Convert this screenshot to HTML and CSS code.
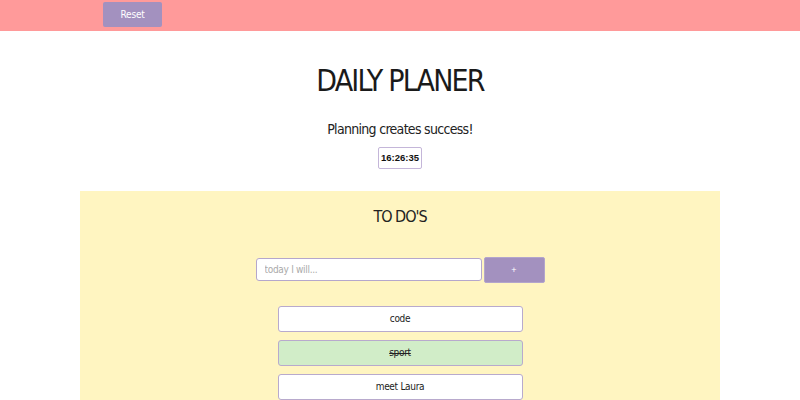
FILE: index.html
```html
<!DOCTYPE html>
<html>
<head>
<meta charset="utf-8">
<link rel="stylesheet" href="styles.css">
</head>
<body>
<header class="topbar">
  <button class="reset-btn">Reset</button>
</header>
<main>
  <h1 class="title">DAILY PLANER</h1>
  <p class="subtitle">Planning creates success!</p>
  <div class="clock-row"><span class="clock">16:26:35</span></div>
  <section class="todo">
    <h2 class="todo-title">TO DO'S</h2>
    <form class="add-form">
      <input class="todo-input" type="text" placeholder="today I will...">
      <button class="add-btn" type="button">+</button>
    </form>
    <ul class="todo-list">
      <li class="todo-item">code</li>
      <li class="todo-item done">sport</li>
      <li class="todo-item">meet Laura</li>
    </ul>
  </section>
</main>
</body>
</html>
```
FILE: styles.css
```css
* { box-sizing: border-box; }
body {
  margin: 0;
  font-family: "DejaVu Sans Condensed", "DejaVu Sans", sans-serif;
  font-stretch: condensed;
  color: #222;
  background: #fff;
}
.topbar {
  height: 31px;
  background: #ff9a9a;
  display: flex;
  align-items: flex-start;
  padding: 2px 0 0 103px;
}
.reset-btn {
  width: 59px;
  height: 25px;
  border: none;
  border-radius: 2px;
  background: #a391bf;
  color: #fff;
  font-family: "DejaVu Sans Condensed", sans-serif;
  font-stretch: condensed;
  font-size: 10px;
  letter-spacing: -0.2px;
}
main { display: flex; flex-direction: column; align-items: center; }
.title {
  margin: 30px 0 0;
  font-weight: normal;
  font-size: 30px;
  line-height: 40px;
  letter-spacing: -1.8px;
  color: #1a1a1a;
}
.subtitle {
  margin: 17px 0 0;
  font-size: 14px;
  line-height: 22px;
  letter-spacing: -0.7px;
  color: #222;
}
.clock-row { margin-top: 6px; height: 22px; }
.clock {
  display: inline-block;
  height: 22px;
  padding: 0 2px;
  border: 1px solid #c4b6d9;
  border-radius: 2px;
  font-family: "Liberation Sans", Arial, sans-serif;
  font-weight: bold;
  font-size: 9.5px;
  line-height: 20px;
  color: #111;
}
.todo {
  align-self: stretch;
  margin: 23px 80px 0;
  background: #fff5c1;
  display: flex;
  flex-direction: column;
  align-items: center;
  padding-top: 14px;
  min-height: 220px;
}
.todo-title {
  margin: 0;
  font-weight: normal;
  font-size: 16px;
  line-height: 24px;
  letter-spacing: -1px;
  color: #222;
}
.add-form {
  display: flex;
  align-items: flex-start;
  gap: 2px;
  margin-top: 28px;
}
.todo-input {
  margin-top: 1px;
  width: 226px;
  height: 23px;
  border: 1px solid #b5a7cc;
  border-radius: 3px;
  padding: 0 8px;
  font-family: "DejaVu Sans Condensed", sans-serif;
  font-stretch: condensed;
  font-size: 10px;
  letter-spacing: -0.3px;
  background: #fff;
}
.todo-input::placeholder { color: #aaa; }
.add-btn {
  width: 61px;
  height: 26px;
  border: 1px solid #b3a5cc;
  border-radius: 2px;
  background: #a391bf;
  color: #fff;
  font-size: 9px;
}
.todo-list {
  list-style: none;
  margin: 23px 0 0;
  padding: 0;
  display: flex;
  flex-direction: column;
  gap: 8px;
}
.todo-item {
  width: 245px;
  height: 26px;
  border: 1px solid #b8aacd;
  border-radius: 3px;
  background: #fff;
  text-align: center;
  font-size: 10px;
  line-height: 24px;
  letter-spacing: -0.3px;
  color: #222;
}
.todo-item.done {
  background: #d1edc8;
  text-decoration: line-through;
}
```
